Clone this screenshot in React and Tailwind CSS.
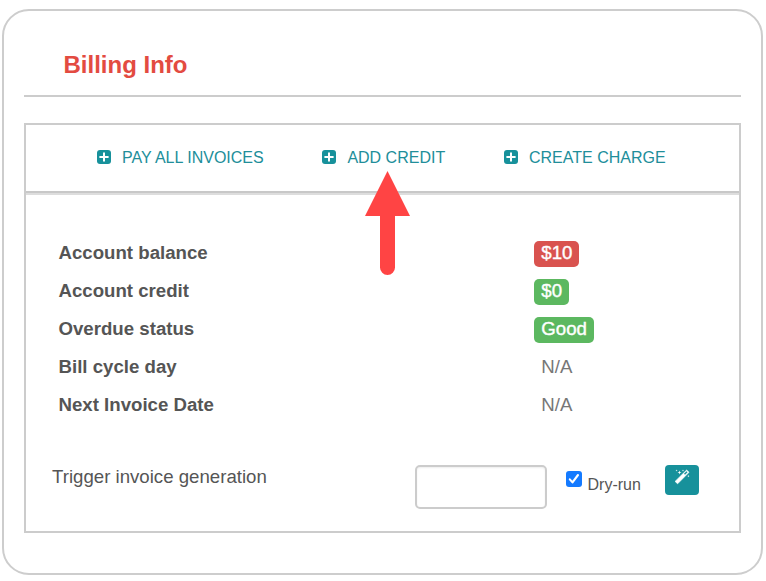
const actions = [
  { label: "PAY ALL INVOICES", place: "ml-[71px] w-[225.4px]" },
  { label: "ADD CREDIT", place: "w-[181.6px]" },
  { label: "CREATE CHARGE", place: "" },
];

const rows = [
  { label: "Account balance", value: "$10", tone: "bg-[#d9534f] text-white [-webkit-text-stroke:0.4px_white]" },
  { label: "Account credit", value: "$0", tone: "bg-[#5cb860] text-white [-webkit-text-stroke:0.4px_white]" },
  { label: "Overdue status", value: "Good", tone: "bg-[#5cb860] text-white [-webkit-text-stroke:0.4px_white]" },
  { label: "Bill cycle day", value: "N/A", tone: "text-[#777]" },
  { label: "Next Invoice Date", value: "N/A", tone: "text-[#777]" },
];

function PlusSquare() {
  return (
    <svg className="mr-[11px] mb-[2px] h-[14px] w-[14px] shrink-0" viewBox="0 0 14 14" aria-hidden="true">
      <rect width="14" height="14" rx="3" fill="#17919b" />
      <path d="M7 2.4v9.2M2.4 7h9.2" stroke="#fff" strokeWidth="2" />
    </svg>
  );
}

function Wand() {
  return (
    <svg className="h-[16px] w-[16px]" viewBox="0 0 16 16" aria-hidden="true">
      <path d="M12.6 1.1 15 3.3 3.6 14.8 1.1 12.4Z" fill="#fff" stroke="#fff" strokeWidth=".7" strokeLinejoin="round" />
      <path d="m10 4.7 2.5-2.4 1 1L11 5.7Z" fill="#17919b" />
      <path d="M5.5 1.4 6 2.9l1.5.5L6 3.9l-.5 1.5L5 3.9l-1.5-.5L5 2.9ZM2.6.4l.3.8.8.3-.8.3-.3.8-.3-.8-.8-.3.8-.3ZM9 .4l.3.8.8.3-.8.3-.3.8-.3-.8-.8-.3.8-.3ZM14.4 6l.3.8.8.3-.8.3-.3.8-.3-.8-.8-.3.8-.3Z" fill="#fff" />
    </svg>
  );
}

export default function App() {
  return (
    <div className="h-[581px] w-[766px] overflow-hidden bg-white pt-[9px] pl-[2px] font-['Liberation_Sans',Arial,sans-serif]">
      <main className="h-[566px] w-[761px] rounded-[27px] border-2 border-[#cdcdcd] pl-[20px]">
        <h1 className="h-[86px] w-[717px] border-b-2 border-[#ccc] pt-[39px] pl-[39.5px] text-[24px] leading-[30px] font-bold text-[#e34b41]">
          Billing Info
        </h1>
        <section className="mt-[26px] h-[410px] w-[717px] border-2 border-[#ccc]">
          <header className="relative flex h-[70px] items-center border-b-2 border-[#ddd] pb-[3px] text-[16px] text-[#218e9a] shadow-[inset_0_-2px_0_#c8c8c8]">
            {actions.map((a) => (
              <a key={a.label} className={`flex items-center whitespace-nowrap ${a.place}`}>
                <PlusSquare />
                {a.label}
              </a>
            ))}
            <svg className="absolute top-[46px] left-[339px] h-[105px] w-[46px]" viewBox="0 0 46 105" aria-hidden="true">
              <path d="M22.5 0 45 45H30v51.5a7.5 7.5 0 0 1-15 0V45H0Z" fill="#ff4444" />
            </svg>
          </header>
          <dl className="pt-[40px] pl-[32.5px] text-[18.65px]">
            {rows.map((r) => (
              <div key={r.label} className="flex h-[38px] items-center">
                <dt className="w-[475.8px] pb-[2px] font-bold text-[#555]">{r.label}</dt>
                <dd className={`h-[26px] rounded-[5px] px-[7px] leading-[24px] ${r.tone}`}>{r.value}</dd>
              </div>
            ))}
          </dl>
          <form className="mt-[40px] flex items-start pl-[26px] text-[#555]">
            <label className="w-[362.5px] text-[18.65px] leading-[24px]">Trigger invoice generation</label>
            <input className="h-[44px] w-[132px] rounded-[5px] border-2 border-[#ccc] bg-white shadow-[inset_0_1px_2px_#eee]" />
            <span className="mt-[6px] ml-[19.5px] flex h-[16px] w-[16px] items-center justify-center rounded-[3px] bg-[#147aff]">
              <svg className="h-[16px] w-[16px]" viewBox="0 0 16 16" aria-hidden="true">
                <path d="m3.8 8.4 2.7 3L12 4" fill="none" stroke="#fff" strokeWidth="2.1" strokeLinecap="round" strokeLinejoin="round" />
              </svg>
            </span>
            <span className="mt-[10px] ml-[5.5px] w-[77.5px] text-[16px] leading-[20px]">Dry-run</span>
            <button type="button" className="flex h-[30px] w-[34px] justify-center rounded-[4px] bg-[#17919b] pt-[4px]">
              <Wand />
            </button>
          </form>
        </section>
      </main>
    </div>
  );
}
